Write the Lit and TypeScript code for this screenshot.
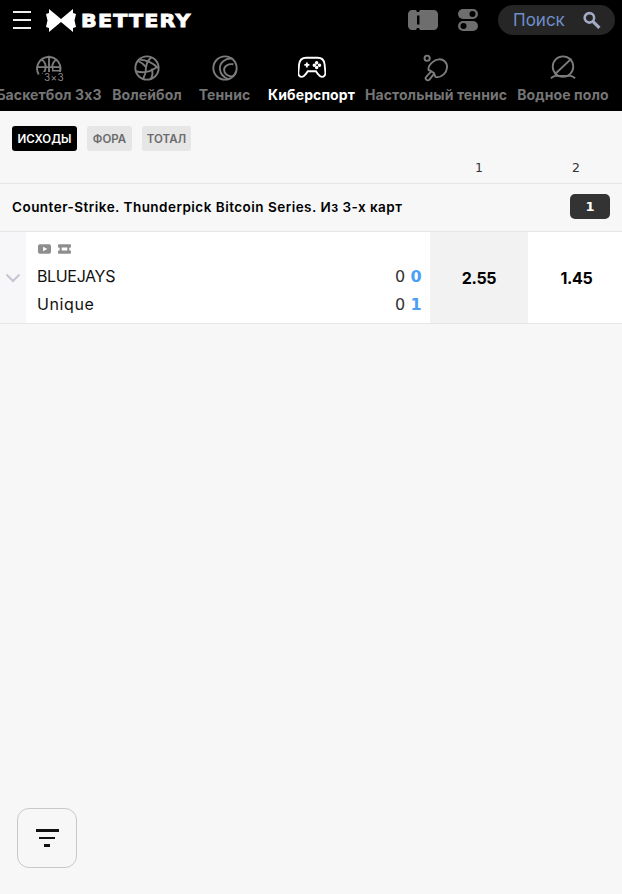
import { LitElement, html, css, svg } from "lit";
import { customElement } from "lit/decorators.js";

const icons: Record<string, unknown> = {
  basket: svg`<path d="M4 21a12.500 12.500 0 1 1 22.500-2M15 1V19M2.500 13H28M7 4.500c3 2.500 4.500 5.500 4.500 8.500 0 3-1 5-3 7.500M23 4.500c-3 2.500-4.500 5.500-4.500 8.500"/><path d="M19 13v4h8v-4" stroke-width="1.600"/>`,
  volley: svg`<circle cx="15" cy="14" r="12.500"/><path d="M14 13c.5-4 2.500-8 6-10.500M14 13C11.500 10 9 8 5.500 6.500M7 5c7 .5 14 3 20 9M14 13c0 4-.5 8-3 12.500M3 17.500c7 2 15 1 22-4M20 14.500c1.500 4 1 8-1 11.500"/>`,
  tennis: svg`<circle cx="15" cy="14" r="12.500"/><path d="M23 4c-7-1-14 4-13.500 11 .4 5 4 9 9 11M24 10c-5-1-10 2-10 6 0 4 4 7 8 7 1.500 0 4-2 5-6"/>`,
  game: svg`<path d="M9 3h12c4.500 0 7 2.500 7.500 7l.8 8.500c.3 3-1.300 5-3.800 5-2 0-3-1.500-4.500-3.500l-1.800-2.500H10.500L8.700 20c-1.500 2-2.500 3.500-4.500 3.500-2.500 0-4.100-2-3.800-5l.8-8.500C1.700 5.500 4.500 3 9 3z"/><path d="M9.500 8v5.500M6.800 10.700h5.400"/><circle cx="20" cy="8.500" r=".9"/><circle cx="23" cy="11" r=".9"/><circle cx="17.500" cy="11" r=".9"/><circle cx="20" cy="13.500" r=".9"/>`,
  ping: svg`<circle cx="5.500" cy="3.500" r="2.800"/><path d="M11 8c4-4 10-4.500 13.500-1s3 9.500-1 13.500c-3 3-6.500 3.700-9 3-.8-1.600-1-3-1.500-3.500L8 26.500c-1 1-2.500 1-3.500 0s-1-2 0-3l5.500-6c-.5-.5-2-.8-3-1.500-.5-2.500.5-5 4-8zM10 17.500l3.500 2.500"/>`,
  water: svg`<circle cx="15" cy="12.500" r="11"/><path d="M6 21L24 4M2 25c2-1.500 3-2.500 5-2.500h16c2 0 3 1 5 2.500"/>`,
};

const tabs = [
  { key: "basket", label: "Баскетбол 3x3", w: 104, gap: 0, sub: true },
  { key: "volley", label: "Волейбол", w: 72, gap: 10 },
  { key: "tennis", label: "Теннис", w: 51, gap: 16 },
  { key: "game", label: "Киберспорт", w: 89, gap: 17 },
  { key: "ping", label: "Настольный теннис", w: 142, gap: 9 },
  { key: "water", label: "Водное поло", w: 94, gap: 9 },
];

@customElement("app-root")
export class AppRoot extends LitElement {
  static styles = css`
    :host { display: block; width: 622px; height: 894px; overflow: hidden; position: relative; background: #f7f7f7; font-family: "Inter", "Liberation Sans", sans-serif; color: #000; }
    * { box-sizing: border-box; }
    header { background: #000; height: 111px; display: flex; flex-direction: column; }
    .top { height: 40px; display: flex; align-items: center; padding: 0 7px 0 13px; }
    .burger { width: 18px; height: 18px; display: flex; flex-direction: column; justify-content: space-between; margin-right: 15px; }
    .burger i { height: 2px; background: #eee; display: block; }
    .logo { width: 30px; height: 23px; margin-right: 5px; fill: #fff; flex: none; }
    .brand { font-family: "DejaVu Sans", sans-serif; font-weight: 700; font-size: 17.500px; line-height: 22px; padding-top: 1px; color: #fff; letter-spacing: 1px; width: 110px; -webkit-text-stroke: .8px #fff; transform: scaleX(1.18); transform-origin: left center; white-space: nowrap; }
    .spacer { flex: 1; }
    .ic1 { width: 30px; height: 20px; fill: #6e6e6e; margin-right: 20px; }
    .ic2 { width: 20px; height: 22px; margin-right: 20px; }
    .search { width: 117px; height: 30px; border-radius: 15px; background: #262626; display: flex; align-items: center; padding: 0 14px 0 15px; justify-content: space-between; color: #6f8fc9; font-size: 17px; }
    .search svg { width: 19px; height: 19px; fill: none; stroke: #a3abc4; stroke-width: 2.400; }
    .tabs { display: flex; margin-left: -3px; height: 71px; }
    .tab { flex: none; display: flex; flex-direction: column; align-items: center; color: #757575; font-size: 14px; letter-spacing: .1px; font-weight: 700; white-space: nowrap; padding-top: 14px; position: relative; }
    .tab svg { width: 28px; height: 28px; fill: none; stroke: #7c7c7c; stroke-width: 2; margin-bottom: 4px; }
    .tab.active { color: #fff; }
    .tab.active svg { stroke: #fff; }
    .sub { position: absolute; top: 32px; left: 50%; margin-left: -6px; font-size: 10px; font-weight: 400; letter-spacing: .3px; color: #8a8a8a; line-height: 10px; background: #000; padding: 0 1px; }
    .filters { display: flex; gap: 10px; padding: 15px 12px 0; }
    .chip { height: 25px; border-radius: 3px; background: #e6e6e6; color: #6b6b6b; font-size: 11.500px; font-weight: 600; display: flex; align-items: center; justify-content: center; }
    .chip.on { background: #000; color: #fff; }
    .w65 { width: 65px; } .w45 { width: 45px; } .w49 { width: 49px; }
    .cols { display: grid; grid-template-columns: 1fr 98px 94px; height: 33px; padding-top: 1px; align-items: center; font-family: "DejaVu Sans", sans-serif; font-size: 12.500px; color: #333; text-align: center; border-bottom: 1px solid #e6e6e6; }
    .c2 { padding-left: 2px; }
    .section { height: 48px; display: flex; align-items: center; justify-content: space-between; padding: 0 12px 2px; font-size: 13.500px; letter-spacing: .48px; font-weight: 600; border-bottom: 1px solid #e6e6e6; white-space: nowrap; }
    .badge { width: 40px; height: 25px; border-radius: 5px; background: #333; color: #fff; font-family: "DejaVu Sans", sans-serif; font-weight: 700; font-size: 13px; letter-spacing: 0; display: flex; align-items: center; justify-content: center; }
    .match { height: 92px; display: grid; grid-template-columns: 26px 1fr 98px 94px; border-bottom: 1px solid #e6e6e6; }
    .arrow { display: flex; align-items: center; justify-content: center; background: #f7f7fa; }
    .arrow svg { width: 16px; height: 10px; fill: none; stroke: #c6c6d4; stroke-width: 2; }
    .info { background: #fff; padding: 12px 9px 0 12px; }
    .minis { display: flex; gap: 7px; height: 10px; }
    .minis svg { width: 13px; height: 10px; fill: #8e8e8e; }
    .team { display: flex; justify-content: space-between; height: 28px; align-items: center; font-size: 16px; color: #111; margin-left: -1px; }
    .team.first { margin-top: 8px; }
    .n1 { letter-spacing: -.35px; } .n2 { letter-spacing: .6px; }
    .score { display: grid; grid-template-columns: 10px 10px; column-gap: 6px; justify-items: center; color: #333; font-family: "DejaVu Sans", sans-serif; font-size: 16px; }
    .score b { font-weight: 700; font-size: 16px; color: #4a9ff5; }
    .odd { display: flex; align-items: center; justify-content: center; background: #fff; font-size: 16px; letter-spacing: -.3px; font-weight: 700; }
    .odd.hl { background: #f2f2f2; }
    .odd.o2 { padding-left: 3px; }
    .fab { position: absolute; left: 17px; top: 808px; width: 60px; height: 60px; border: 1px solid #c8c8c8; border-radius: 12px; display: flex; flex-direction: column; align-items: center; justify-content: center; gap: 5px; }
    .fab i { display: block; height: 2.500px; background: #111; }
    .l1 { width: 23px; } .l2 { width: 16px; } .l3 { width: 6px; }
  `;

  render() {
    return html`
      <header>
        <div class="top">
          <div class="burger"><i></i><i></i><i></i></div>
          <svg class="logo" viewBox="0 0 30 23"><path d="M0 5l3-1V0l12 10 12-10v4l3 1-1.500 6.500L30 18l-3 1v4L15 13 3 23v-4l-3-1 1.500-6.500z"/></svg>
          <div class="brand">BETTERY</div>
          <div class="spacer"></div>
          <svg class="ic1" viewBox="0 0 30 20"><path fill-rule="evenodd" d="M4 0h4l1 2h2l1-2h14c2 0 4 2 4 4v12c0 2-2 4-4 4H12l-1-2H9l-1 2H4c-2 0-4-2-4-4V4c0-2 2-4 4-4zm5 5.500v9h2.500v-9z"/></svg>
          <svg class="ic2" viewBox="0 0 20 22"><rect x="0" y="0" width="20" height="10" rx="5" fill="#6e6e6e"/><circle cx="14.500" cy="5" r="3" fill="#000"/><rect x="0" y="12" width="20" height="10" rx="5" fill="#6e6e6e"/><circle cx="5.500" cy="17" r="3" fill="#000"/></svg>
          <div class="search"><span>Поиск</span><svg viewBox="0 0 18 18"><circle cx="7" cy="6.500" r="4.500"/><path d="M10.500 10l6 6" stroke-width="3"/></svg></div>
        </div>
        <div class="tabs">
          ${tabs.map((t) => html`
            <div class="tab ${t.key === "game" ? "active" : ""}" style="width:${t.w}px;margin-left:${t.gap}px">
              <svg viewBox="0 0 30 28">${icons[t.key]}</svg>
              ${t.sub ? html`<span class="sub">3×3</span>` : ""}
              <span>${t.label}</span>
            </div>`)}
        </div>
      </header>
      <div class="filters">
        <div class="chip on w65">ИСХОДЫ</div><div class="chip w45">ФОРА</div><div class="chip w49">ТОТАЛ</div>
      </div>
      <div class="cols"><span></span><span>1</span><span class="c2">2</span></div>
      <div class="section"><span>Counter-Strike. Thunderpick Bitcoin Series. Из 3-х карт</span><span class="badge">1</span></div>
      <div class="match">
        <div class="arrow"><svg viewBox="0 0 16 10"><path d="M1.500 1.500L8 8l6.500-6.500"/></svg></div>
        <div class="info">
          <div class="minis">
            <svg viewBox="0 0 14 10"><path fill-rule="evenodd" d="M2 0h10a2 2 0 0 1 2 2v6a2 2 0 0 1-2 2H2a2 2 0 0 1-2-2V2a2 2 0 0 1 2-2zm3.500 2.500v5L10 5z"/></svg>
            <svg viewBox="0 0 14 10"><path fill-rule="evenodd" d="M1 0h12a1 1 0 0 1 1 1v2a2 2 0 0 0 0 4v2a1 1 0 0 1-1 1H1a1 1 0 0 1-1-1V7a2 2 0 0 0 0-4V1a1 1 0 0 1 1-1zm3 3.500v3h6v-3z"/></svg>
          </div>
          <div class="team first"><span class="n1">BLUEJAYS</span><span class="score"><span>0</span><b>0</b></span></div>
          <div class="team"><span class="n2">Unique</span><span class="score"><span>0</span><b>1</b></span></div>
        </div>
        <div class="odd hl">2.55</div>
        <div class="odd o2">1.45</div>
      </div>
      <div class="fab"><i class="l1"></i><i class="l2"></i><i class="l3"></i></div>
    `;
  }
}
